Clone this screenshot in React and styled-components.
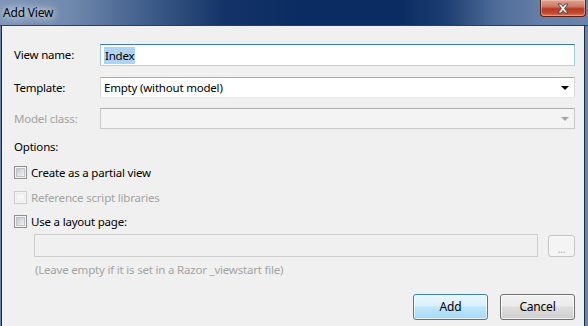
import React from 'react';
import styled, { createGlobalStyle } from 'styled-components';

const GlobalStyle = createGlobalStyle`
    html, body {
        margin: 0;
        padding: 0;
        background: #f0f0f0;
    }
    body {
        font-family: "Noto Sans", "Liberation Sans", sans-serif;
        font-size: 11.5px;
        letter-spacing: -0.2px;
        color: #000;
    }
`

const Window = styled.div`
    width: 588px;
    height: 326px;
    display: flex;
    flex-direction: column;
    overflow: hidden;
    background: #6c86ab;
`

const TitleBar = styled.div`
    height: 25px;
    flex: none;
    display: flex;
    align-items: flex-start;
    justify-content: space-between;
    background: linear-gradient(90deg, #7d94b6 0%, #7089ae 12%, #3c5a88 26%, #143468 38%, #0b2c62 50%, #0b2c62 68%, #1d3e72 76%, #4d6a97 84%, #6580a8 92%, #6a84aa 100%);
    border-bottom: 1px solid #2b3e5c;
`

const Title = styled.div`
    padding: 5px 0 0 3px;
    font-size: 12px;
    line-height: 16px;
    color: #000;
    text-shadow: 0 0 6px #e4eaf2, 0 0 10px #d2dbe8, 0 0 16px #bccadd;
`

const CloseButton = styled.div`
    width: 44px;
    height: 16px;
    margin-right: 2px;
    border: 1px solid #5e2118;
    border-top: none;
    border-radius: 0 0 4px 4px;
    background: linear-gradient(180deg, #dba592 0%, #cf7a63 40%, #b93a22 55%, #c4472c 80%, #d9785a 100%);
    box-shadow: inset 0 0 0 1px rgba(255, 210, 190, 0.45);
    display: flex;
    align-items: center;
    justify-content: center;
`

const Frame = styled.div`
    flex: 1;
    display: flex;
    padding: 0 3px 0 1px;
`

const Body = styled.div`
    flex: 1;
    background: #f0f0f0;
    border-left: 1px solid #1c2a40;
    border-right: 1px solid #1c2a40;
    padding: 18px 9px 0 12px;
    display: flex;
    flex-direction: column;
`

const FieldRow = styled.div`
    display: grid;
    grid-template-columns: 86px 1fr;
    align-items: center;
    margin-bottom: ${p => p.$gap}px;
`

const Label = styled.div`
    line-height: 16px;
    color: ${p => (p.$disabled ? '#a3a3a3' : '#000')};
    white-space: nowrap;
`

const TextBox = styled.div`
    height: 20px;
    border: 1px solid;
    border-color: #3d7bad #a4c9e3 #b5cfe7 #a4c9e3;
    background: #fff;
    display: flex;
    align-items: center;
    padding-left: 3px;
`

const Selected = styled.span`
    background: #b0d2f3;
    line-height: 17px;
    padding: 0 1px;
`

const Select = styled.div`
    height: 19px;
    border: 1px solid;
    border-color: ${p => (p.$disabled ? '#adadad #c9c9c9 #c9c9c9 #c9c9c9' : '#acacac #dadada #e3e9ef #dadada')};
    background: ${p => (p.$disabled ? '#f4f4f4' : '#fff')};
    display: flex;
    align-items: center;
    justify-content: space-between;
    padding: 0 5px 0 3px;
`

const Arrow = styled.span`
    width: 0;
    height: 0;
    border-left: 4px solid transparent;
    border-right: 4px solid transparent;
    border-top: 4px solid ${p => (p.$disabled ? '#a6a6a6' : '#000')};
`

const SectionLabel = styled.div`
    line-height: 16px;
    margin-bottom: ${p => p.$gap}px;
`

const CheckRow = styled.label`
    display: flex;
    align-items: center;
    gap: 4px;
    height: 16px;
    margin-bottom: ${p => p.$gap}px;
    color: ${p => (p.$disabled ? '#a3a3a3' : '#000')};
`

const Box = styled.span`
    width: 11px;
    height: 11px;
    border: 1px solid ${p => (p.$disabled ? '#cdcdcd' : '#8e8f8f')};
    background: #f4f4f4;
    display: flex;
    align-items: center;
    justify-content: center;

    &::after {
        content: '';
        width: 9px;
        height: 9px;
        background: ${p => (p.$disabled ? '#f4f4f4' : 'linear-gradient(135deg, #c4c8ce 0%, #dfe1e4 60%, #f3f3f3 100%)')};
        border: 1px solid ${p => (p.$disabled ? '#ececec' : '#bfc2c7')};
        box-sizing: border-box;
    }
`

const LayoutRow = styled.div`
    display: flex;
    align-items: center;
    gap: 10px;
    padding-left: 20px;
    margin-bottom: 5px;
`

const DisabledInput = styled.div`
    flex: 1;
    height: 21px;
    border: 1px solid #cccccc;
    background: #f0f0f0;
`

const BrowseButton = styled.div`
    width: 25px;
    height: 18px;
    border: 1px solid #c5c5c5;
    border-radius: 3px;
    background: #f4f4f4;
    color: #a8a8a8;
    font-size: 10px;
    display: flex;
    align-items: flex-end;
    justify-content: center;
    padding-bottom: 2px;
    line-height: 10px;
`

const Hint = styled.div`
    padding-left: 21px;
    line-height: 16px;
    color: #a3a3a3;
    margin-bottom: 16px;
`

const ButtonBar = styled.div`
    display: flex;
    justify-content: flex-end;
    gap: 12px;
`

const Button = styled.div`
    width: 73px;
    height: 24px;
    border: 1px solid ${p => (p.$primary ? '#3c7fb1' : '#707070')};
    border-radius: 3px;
    background: ${p => (p.$primary
        ? 'linear-gradient(180deg, #eaf6fd 0%, #d9f0fc 45%, #bee6fd 50%, #a7d9f5 100%)'
        : 'linear-gradient(180deg, #f2f2f2 0%, #ebebeb 45%, #dddddd 50%, #cfcfcf 100%)')};
    box-shadow: inset 0 0 0 1px rgba(255, 255, 255, 0.7);
    display: flex;
    align-items: center;
    justify-content: center;
    line-height: 16px;
    font-size: 12px;
`

const CloseGlyph = () => (
    <svg width="14" height="11" viewBox="0 0 14 11">
        <path d="M2 1 L5 1 L7 3.5 L9 1 L12 1 L8.6 5.5 L12 10 L9 10 L7 7.5 L5 10 L2 10 L5.4 5.5 Z"
            fill="#fff" stroke="#4a3a3a" strokeWidth="0.9" strokeLinejoin="round" />
    </svg>
)

const Checkbox = ({ label, disabled, gap }) => (
    <CheckRow $disabled={disabled} $gap={gap}>
        <Box $disabled={disabled} />
        {label}
    </CheckRow>
)

export default function App() {
    return (
        <Window>
            <GlobalStyle />
            <TitleBar>
                <Title>Add View</Title>
                <CloseButton><CloseGlyph /></CloseButton>
            </TitleBar>
            <Frame>
                <Body>
                    <FieldRow $gap={11}>
                        <Label>View name:</Label>
                        <TextBox><Selected>Index</Selected></TextBox>
                    </FieldRow>
                    <FieldRow $gap={10}>
                        <Label>Template:</Label>
                        <Select>Empty (without model)<Arrow /></Select>
                    </FieldRow>
                    <FieldRow $gap={10}>
                        <Label $disabled>Model class:</Label>
                        <Select $disabled><span /><Arrow $disabled /></Select>
                    </FieldRow>
                    <SectionLabel $gap={9}>Options:</SectionLabel>
                    <Checkbox label="Create as a partial view" gap={9} />
                    <Checkbox label="Reference script libraries" disabled gap={8} />
                    <Checkbox label="Use a layout page:" gap={5} />
                    <LayoutRow>
                        <DisabledInput />
                        <BrowseButton>...</BrowseButton>
                    </LayoutRow>
                    <Hint>(Leave empty if it is set in a Razor _viewstart file)</Hint>
                    <ButtonBar>
                        <Button $primary>Add</Button>
                        <Button>Cancel</Button>
                    </ButtonBar>
                </Body>
            </Frame>
        </Window>
    );
}
